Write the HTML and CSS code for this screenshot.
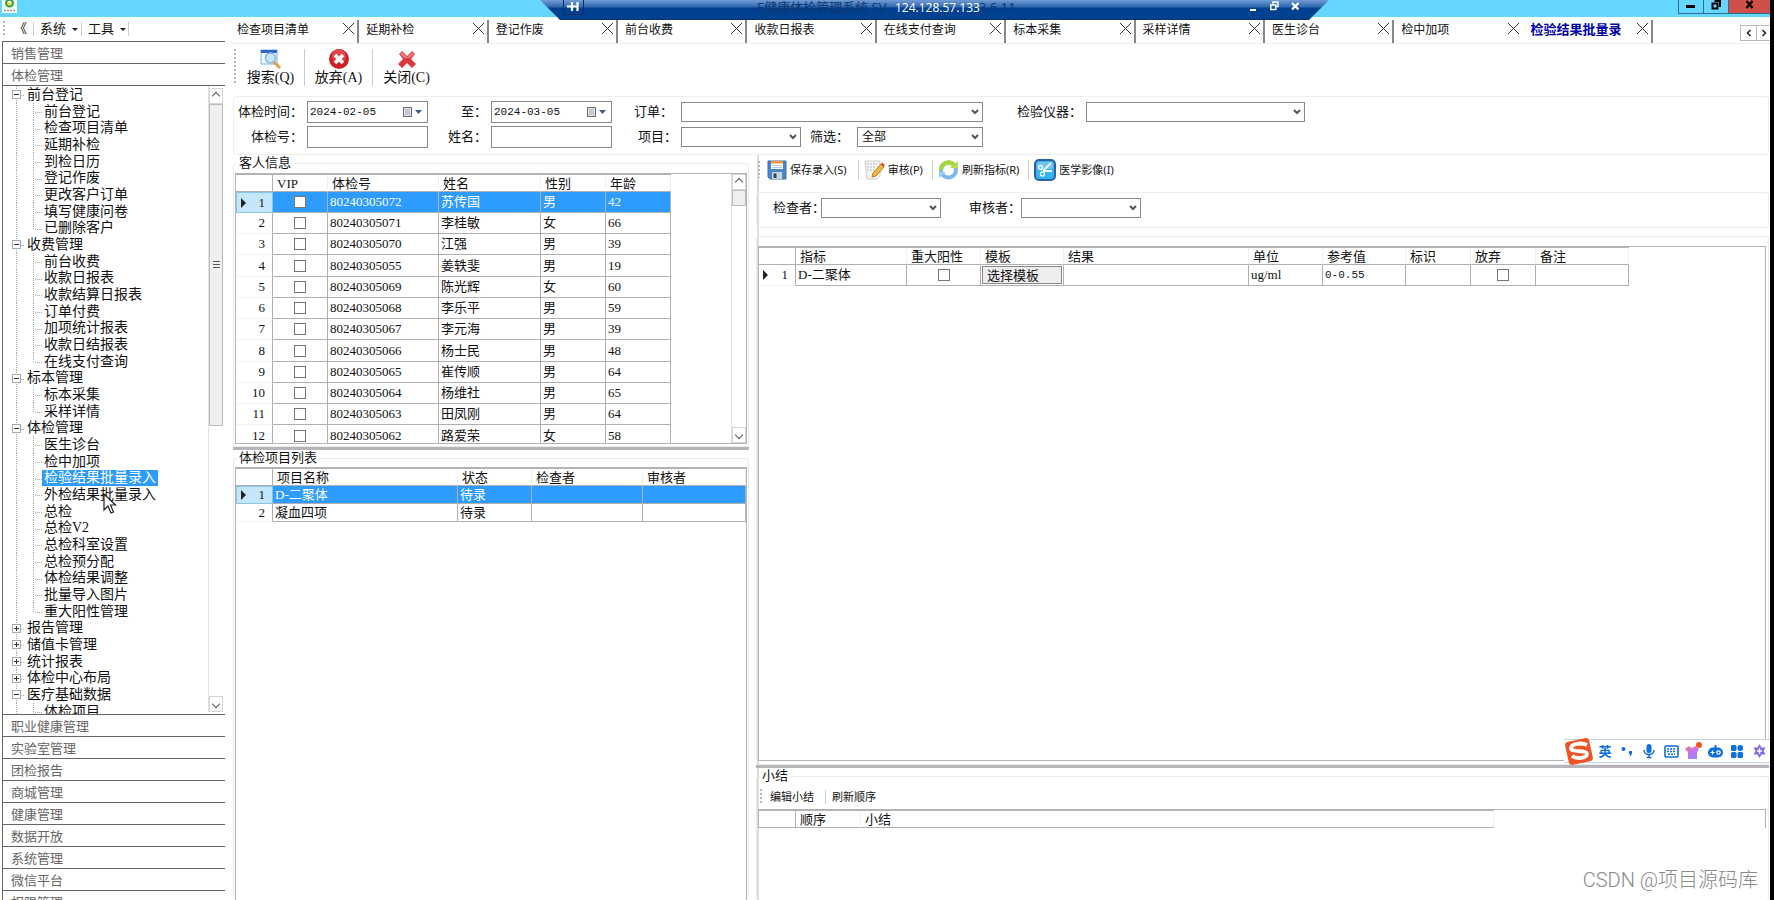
FILE: index.html
```html
<!DOCTYPE html>
<html lang="zh-CN">
<head>
<meta charset="utf-8">
<title>E健康体检管理系统</title>
<link rel="stylesheet" href="styles.css">
</head>
<body>
<div class="desktop">
  <header class="titlebar">
    <svg class="app-logo" width="15" height="13" viewBox="0 0 15 13"><rect width="15" height="13" fill="#f4fbf4"/><circle cx="7.500" cy="3" r="3.400" fill="none" stroke="#3aa537" stroke-width="2.200"/><path d="M5 3.500h5" stroke="#e8c62c" stroke-width="1.500"/><path d="M2 10.500h11" stroke="#999" stroke-width="1.500" stroke-dasharray="2 1"/></svg>
    <div class="window-buttons">
      <button class="win-btn" aria-label="最小化"><svg width="10" height="10"><path d="M0 6.500h9" stroke="#000" stroke-width="3"/></svg></button>
      <button class="win-btn" aria-label="还原"><svg width="10" height="10"><path d="M1.500 3.500h5v5h-5zM3.500 1h5.500v6" fill="none" stroke="#000" stroke-width="2"/></svg></button>
      <button class="win-btn win-close" aria-label="关闭"><svg width="10" height="10"><path d="M1.500 1l6 7M7.500 1l-6 7" stroke="#000" stroke-width="2.200"/></svg></button>
    </div>
  </header>

  <div class="remote-bar">
    <button class="pin" aria-label="固定"><svg width="13" height="11"><path d="M0 5.500h4M5 1v9M10.500 1v9M5 5.500h6" stroke="#fff" stroke-width="2.200" fill="none"/></svg></button>
    <span class="ghost ghost-name">E健康体检管理系统 SV</span>
    <span class="host">124.128.57.133</span>
    <span class="ghost">3.6.11</span>
    <span class="remote-actions">
      <button aria-label="最小化"><svg width="9" height="10"><path d="M1 9h6" stroke="#fff" stroke-width="2"/></svg></button>
      <button aria-label="还原"><svg width="9" height="10"><path d="M.8 4h5v4.500h-5zM3 3.500v-2.500h5v4.500h-1.500" stroke="#fff" stroke-width="1.400" fill="none"/></svg></button>
      <button aria-label="断开"><svg width="9" height="10"><path d="M1 2l6.500 6.500M7.500 2l-6.500 6.500" stroke="#fff" stroke-width="2.200"/></svg></button>
    </span>
  </div>

  <div class="workspace">
    <aside class="sidebar">
      <nav class="menu">
        <span class="grip"></span>
        <button class="collapse">《</button>
        <button class="menu-btn">系统</button>
        <button class="menu-btn">工具</button>
      </nav>
      <div class="accordion">
        <button class="section">销售管理</button>
        <button class="section">体检管理</button>
      </div>
      <div class="tree-pane">
        <ul class="tree">
          <li class="branch"><i class="box"></i>前台登记</li>
          <li class="leaf">前台登记</li>
          <li class="leaf">检查项目清单</li>
          <li class="leaf">延期补检</li>
          <li class="leaf">到检日历</li>
          <li class="leaf">登记作废</li>
          <li class="leaf">更改客户订单</li>
          <li class="leaf">填写健康问卷</li>
          <li class="leaf last">已删除客户</li>
          <li class="branch"><i class="box"></i>收费管理</li>
          <li class="leaf">前台收费</li>
          <li class="leaf">收款日报表</li>
          <li class="leaf">收款结算日报表</li>
          <li class="leaf">订单付费</li>
          <li class="leaf">加项统计报表</li>
          <li class="leaf">收款日结报表</li>
          <li class="leaf last">在线支付查询</li>
          <li class="branch"><i class="box"></i>标本管理</li>
          <li class="leaf">标本采集</li>
          <li class="leaf last">采样详情</li>
          <li class="branch"><i class="box"></i>体检管理</li>
          <li class="leaf">医生诊台</li>
          <li class="leaf">检中加项</li>
          <li class="leaf"><span class="picked">检验结果批量录入</span></li>
          <li class="leaf">外检结果批量录入</li>
          <li class="leaf">总检</li>
          <li class="leaf">总检V2</li>
          <li class="leaf">总检科室设置</li>
          <li class="leaf">总检预分配</li>
          <li class="leaf">体检结果调整</li>
          <li class="leaf">批量导入图片</li>
          <li class="leaf last">重大阳性管理</li>
          <li class="branch"><i class="box plus"></i>报告管理</li>
          <li class="branch"><i class="box plus"></i>储值卡管理</li>
          <li class="branch"><i class="box plus"></i>统计报表</li>
          <li class="branch"><i class="box plus"></i>体检中心布局</li>
          <li class="branch"><i class="box"></i>医疗基础数据</li>
          <li class="leaf">体检项目</li>
        </ul>
        <div class="scrollbar">
          <span class="arrow up"></span>
          <span class="thumb thumb-tree"></span>
          <span class="arrow down"></span>
        </div>
      </div>
      <div class="accordion accordion-bottom">
        <button class="section">职业健康管理</button>
        <button class="section">实验室管理</button>
        <button class="section">团检报告</button>
        <button class="section">商城管理</button>
        <button class="section">健康管理</button>
        <button class="section">数据开放</button>
        <button class="section">系统管理</button>
        <button class="section">微信平台</button>
        <button class="section">权限管理</button>
      </div>
      <svg class="cursor" width="14" height="22" viewBox="0 0 14 22"><path d="M1 1v16l4-4 3 7 2.500-1-3-7h5z" fill="#fff" stroke="#222" stroke-width="1.200"/></svg>
    </aside>

    <main class="main">
      <div class="tabs-row">
        <nav class="tabs">
          <div class="tab"><span>检查项目清单</span><button class="x" aria-label="关闭"></button></div>
          <div class="tab"><span>延期补检</span><button class="x" aria-label="关闭"></button></div>
          <div class="tab"><span>登记作废</span><button class="x" aria-label="关闭"></button></div>
          <div class="tab"><span>前台收费</span><button class="x" aria-label="关闭"></button></div>
          <div class="tab"><span>收款日报表</span><button class="x" aria-label="关闭"></button></div>
          <div class="tab"><span>在线支付查询</span><button class="x" aria-label="关闭"></button></div>
          <div class="tab"><span>标本采集</span><button class="x" aria-label="关闭"></button></div>
          <div class="tab"><span>采样详情</span><button class="x" aria-label="关闭"></button></div>
          <div class="tab"><span>医生诊台</span><button class="x" aria-label="关闭"></button></div>
          <div class="tab before-active"><span>检中加项</span><button class="x" aria-label="关闭"></button></div>
          <div class="tab active"><span>检验结果批量录</span><button class="x" aria-label="关闭"></button></div>
        </nav>
        <div class="tab-scroll">
          <button aria-label="向左"><svg width="6" height="8"><path d="M4.500 1L1.500 4l3 3" fill="none" stroke="#222" stroke-width="1.500"/></svg></button>
          <button aria-label="向右"><svg width="6" height="8"><path d="M1.500 1l3 3-3 3" fill="none" stroke="#222" stroke-width="1.500"/></svg></button>
        </div>
      </div>

      <div class="toolbar">
        <span class="grip"></span>
        <button class="tool">
          <svg width="22" height="20" viewBox="0 0 22 20"><rect x="1" y="1" width="16" height="14" fill="#eef6ff" stroke="#7fb2ea"/><rect x="1" y="1" width="16" height="3" fill="#2f66c8"/><path d="M14 13l6 6" stroke="#d9a441" stroke-width="3"/><circle cx="10.500" cy="9" r="5" fill="#bfeaff" stroke="#8db4d8" stroke-width="1.500"/></svg>
          <span>搜索(Q)</span>
        </button>
        <button class="tool">
          <svg width="22" height="20" viewBox="0 0 22 20"><circle cx="11" cy="10" r="10" fill="#cf1f26"/><circle cx="11" cy="7" r="7" fill="#e0474b"/><path d="M7 6l8 8M15 6l-8 8" stroke="#fff" stroke-width="3.600"/></svg>
          <span>放弃(A)</span>
        </button>
        <button class="tool">
          <svg width="22" height="20" viewBox="0 0 22 20"><path d="M3 5l3-3 5 5 5-5 3 3-4 5 5 5-4 4-5-5-5 5-4-4 5-5z" fill="#d8393d"/><path d="M4 5l2-2 5 5 5-5 2 2-4 4h-6z" fill="#ea7a7c"/></svg>
          <span>关闭(C)</span>
        </button>
      </div>

      <form class="filters">
        <label for="d1">体检时间：</label>
        <div class="date"><input id="d1" type="text" value="2024-02-05"><svg width="20" height="12"><path d="M1.500 1.500h8v9h-8z" fill="#e4e4ee" stroke="#666"/><path d="M3 4h5M3 6h5M3 8h5" stroke="#aab"/><path d="M13 4h7l-3.500 4z" fill="#3c5a8c"/></svg></div>
        <label for="d2">至：</label>
        <div class="date"><input id="d2" type="text" value="2024-03-05"><svg width="20" height="12"><path d="M1.500 1.500h8v9h-8z" fill="#e4e4ee" stroke="#666"/><path d="M3 4h5M3 6h5M3 8h5" stroke="#aab"/><path d="M13 4h7l-3.500 4z" fill="#3c5a8c"/></svg></div>
        <label class="loose" for="order">订单：</label>
        <select id="order" class="span3"><option></option></select>
        <label for="device">检验仪器：</label>
        <select id="device"><option></option></select>

        <label for="no">体检号：</label>
        <input id="no" class="text" type="text">
        <label for="name">姓名：</label>
        <input id="name" class="text" type="text">
        <label for="item">项目：</label>
        <select id="item"><option></option></select>
        <label class="loose" for="pick">筛选：</label>
        <select id="pick"><option>全部</option></select>
      </form>

      <div class="panes">
        <section class="left">
          <fieldset class="group guests">
            <legend>客人信息</legend>
            <div class="grid guests-grid">
              <table class="data guests-table">
                <colgroup><col class="w38"><col class="w55"><col class="w111"><col class="w102"><col class="w65"><col class="w65"></colgroup>
                <thead><tr><th></th><th>VIP</th><th>体检号</th><th>姓名</th><th>性别</th><th>年龄</th></tr></thead>
                <tbody>
                  <tr class="selected"><th class="current">1</th><td class="mid"><input type="checkbox" aria-label="VIP"></td><td>80240305072</td><td>苏传国</td><td>男</td><td>42</td></tr>
                  <tr><th>2</th><td class="mid"><input type="checkbox" aria-label="VIP"></td><td>80240305071</td><td>李桂敏</td><td>女</td><td>66</td></tr>
                  <tr><th>3</th><td class="mid"><input type="checkbox" aria-label="VIP"></td><td>80240305070</td><td>江强</td><td>男</td><td>39</td></tr>
                  <tr><th>4</th><td class="mid"><input type="checkbox" aria-label="VIP"></td><td>80240305055</td><td>姜轶斐</td><td>男</td><td>19</td></tr>
                  <tr><th>5</th><td class="mid"><input type="checkbox" aria-label="VIP"></td><td>80240305069</td><td>陈光辉</td><td>女</td><td>60</td></tr>
                  <tr><th>6</th><td class="mid"><input type="checkbox" aria-label="VIP"></td><td>80240305068</td><td>李乐平</td><td>男</td><td>59</td></tr>
                  <tr><th>7</th><td class="mid"><input type="checkbox" aria-label="VIP"></td><td>80240305067</td><td>李元海</td><td>男</td><td>39</td></tr>
                  <tr><th>8</th><td class="mid"><input type="checkbox" aria-label="VIP"></td><td>80240305066</td><td>杨士民</td><td>男</td><td>48</td></tr>
                  <tr><th>9</th><td class="mid"><input type="checkbox" aria-label="VIP"></td><td>80240305065</td><td>崔传顺</td><td>男</td><td>64</td></tr>
                  <tr><th>10</th><td class="mid"><input type="checkbox" aria-label="VIP"></td><td>80240305064</td><td>杨维社</td><td>男</td><td>65</td></tr>
                  <tr><th>11</th><td class="mid"><input type="checkbox" aria-label="VIP"></td><td>80240305063</td><td>田凤刚</td><td>男</td><td>64</td></tr>
                  <tr><th>12</th><td class="mid"><input type="checkbox" aria-label="VIP"></td><td>80240305062</td><td>路爱荣</td><td>女</td><td>58</td></tr>
                </tbody>
              </table>
              <div class="scrollbar">
                <span class="arrow up"></span>
                <span class="thumb thumb-guests"></span>
                <span class="arrow down"></span>
              </div>
            </div>
          </fieldset>
          <div class="splitter"></div>
          <fieldset class="group items">
            <legend>体检项目列表</legend>
            <div class="grid">
              <table class="data items-table">
                <colgroup><col class="w38"><col class="w185"><col class="w74"><col class="w111"><col></colgroup>
                <thead><tr><th></th><th>项目名称</th><th>状态</th><th>检查者</th><th>审核者</th></tr></thead>
                <tbody>
                  <tr class="selected"><th class="current">1</th><td>D-二聚体</td><td>待录</td><td></td><td></td></tr>
                  <tr><th>2</th><td>凝血四项</td><td>待录</td><td></td><td></td></tr>
                </tbody>
              </table>
            </div>
          </fieldset>
        </section>

        <section class="right">
          <div class="actions">
            <span class="grip"></span>
            <button class="action"><svg width="20" height="20" viewBox="0 0 20 20"><path d="M1 1h18v18H3l-2-2z" fill="#4a86c8" stroke="#3b6ea8"/><rect x="4" y="1" width="12" height="8" fill="#fff"/><rect x="4" y="1" width="12" height="2.500" fill="#f0973c"/><path d="M5 5.500h10M5 7.500h10" stroke="#bcd"/><rect x="5" y="12" width="10" height="7" fill="#c9d3dc"/><rect x="6.500" y="13.500" width="3" height="4.500" fill="#345"/></svg>保存录入(S)</button>
            <button class="action"><svg width="21" height="20" viewBox="0 0 21 20"><path d="M1 1h15v15l-3 3H3z" fill="#f4f4f4" stroke="#ccc"/><path d="M3 4h10M3 7h9M3 10h7" stroke="#bbb" stroke-dasharray="2 1"/><path d="M8 17l1-4 8-9 3 3-8 9z" fill="#f1b83a" stroke="#b9821c"/><path d="M16.500 4.500l1.500-2 3 2.500-1.500 2z" fill="#d3504a"/></svg>审核(P)</button>
            <button class="action"><svg width="21" height="22" viewBox="0 0 21 22"><circle cx="10.500" cy="11" r="7.500" fill="none" stroke="#7db8ee" stroke-width="4"/><path d="M3 11a7.500 7.500 0 0 1 13-5" fill="none" stroke="#a6d63f" stroke-width="4.500"/><path d="M12 9h8V2z" fill="#b6dc5c"/><path d="M8 13H1v6z" fill="#9ccdf4"/></svg>刷新指标(R)</button>
            <button class="action"><svg width="22" height="22" viewBox="0 0 22 22"><rect x="1" y="1" width="20" height="20" rx="4" fill="#35b4ee" stroke="#2a62a8" stroke-width="2"/><rect x="3" y="3" width="16" height="7" rx="2" fill="#74c4f2"/><path d="M17 4l-8 8M18 12H9" stroke="#e9faff" stroke-width="1.800"/><circle cx="6.500" cy="8.500" r="2" fill="none" stroke="#e9faff" stroke-width="1.300"/><circle cx="8.500" cy="15" r="2" fill="none" stroke="#e9faff" stroke-width="1.300"/></svg>医学影像(I)</button>
          </div>
          <div class="checkers">
            <label for="c1">检查者：</label><select id="c1"><option></option></select>
            <label for="c2">审核者：</label><select id="c2"><option></option></select>
          </div>
          <div class="group results">
            <div class="grid">
              <table class="data results-table">
                <colgroup><col class="w38"><col class="w111"><col class="w74"><col class="w83"><col class="w185"><col class="w74"><col class="w83"><col class="w65"><col class="w65"><col class="w93"></colgroup>
                <thead><tr><th></th><th>指标</th><th>重大阳性</th><th>模板</th><th>结果</th><th>单位</th><th>参考值</th><th>标识</th><th>放弃</th><th>备注</th></tr></thead>
                <tbody>
                  <tr><th class="current">1</th><td>D-二聚体</td><td class="mid"><input type="checkbox" aria-label="重大阳性"></td><td class="cell-btn"><button>选择模板</button></td><td></td><td>ug/ml</td><td class="mono">0-0.55</td><td></td><td class="mid"><input type="checkbox" aria-label="放弃"></td><td></td></tr>
                </tbody>
              </table>
            </div>
          </div>
          <div class="splitter"></div>
          <fieldset class="group summary">
            <legend>小结</legend>
            <div class="actions summary-actions">
              <span class="grip"></span>
              <button class="action">编辑小结</button>
              <button class="action">刷新顺序</button>
            </div>
            <div class="grid">
              <table class="data summary-table">
                <colgroup><col class="w38"><col class="w65"><col></colgroup>
                <thead><tr><th></th><th>顺序</th><th>小结</th></tr></thead>
              </table>
            </div>
          </fieldset>
        </section>
      </div>
    </main>
  </div>

  <div class="ime">
    <svg class="ime-logo" width="30" height="29" viewBox="0 0 30 29"><path d="M3 5L22 1q2 0 3 2l4 18q0 2-2 3L8 28q-2 0-3-2L1 8q0-2 2-3z" fill="#ee5326"/><path d="M23 8C17 5 7 7 7 11.500c0 4 16 1 16 5.500 0 4-10 5.500-15 2" fill="none" stroke="#fff" stroke-width="3.800"/></svg>
    <span class="ime-mode">英</span>
    <svg width="12" height="14" viewBox="0 0 12 14"><circle cx="2.500" cy="5" r="2" fill="#0f6fdc"/><path d="M8 7h3c.5 3-1 5-2.500 5.500L9 10H8z" fill="#0f6fdc"/></svg>
    <svg width="12" height="16" viewBox="0 0 12 16"><rect x="3.500" y="1" width="5" height="9" rx="2.500" fill="#0f6fdc"/><path d="M1 7c0 6 10 6 10 0M6 11v4M3.500 14.500h5" fill="none" stroke="#0f6fdc" stroke-width="1.500"/></svg>
    <svg width="15" height="13" viewBox="0 0 15 13"><rect x="1" y="1" width="13" height="11" rx="1" fill="none" stroke="#0f6fdc" stroke-width="1.600"/><path d="M3 4h9M3 6.500h9M4 9.200h7" stroke="#0f6fdc" stroke-width="1.400" stroke-dasharray="2 1"/></svg>
    <svg width="17" height="18" viewBox="0 0 17 18"><defs><linearGradient id="shirt" x1="0" y1="0" x2="1" y2="1"><stop offset="0" stop-color="#ff6b8a"/><stop offset=".6" stop-color="#b678ff"/><stop offset="1" stop-color="#6f9bff"/></linearGradient></defs><path d="M0 7l4-3c1 2 5 2 6 0l4 3-2 3v7H3v-7z" fill="url(#shirt)"/><circle cx="14" cy="3" r="3" fill="#ee5326"/></svg>
    <svg width="15" height="13" viewBox="0 0 15 13"><path d="M7.500 0v3" stroke="#0f6fdc" stroke-width="2"/><rect y="2.500" width="15" height="10" rx="5" fill="#0f6fdc"/><path d="M2.500 7.500h4M4.500 5.500v4" stroke="#fff" stroke-width="1.200"/><circle cx="10.500" cy="7.500" r="1.700" fill="none" stroke="#fff" stroke-width="1.200"/></svg>
    <svg width="12" height="13" viewBox="0 0 12 13"><rect y="0" width="5.500" height="6" rx="1.500" fill="#0f6fdc"/><rect x="6.500" width="5.500" height="6" rx="2.500" fill="#0f6fdc"/><rect y="7" width="5.500" height="6" rx="1.500" fill="#0f6fdc"/><rect x="6.500" y="7" width="5.500" height="6" rx="1.500" fill="#0f6fdc"/></svg>
    <svg width="13" height="14" viewBox="0 0 13 14"><path d="M6.500 0l2 3.500h4L10.500 7l2 3.500h-4l-2 3.500-2-3.500h-4L2.500 7l-2-3.500h4z" fill="#7b6fe8"/><path d="M6.500 4v6M4 7h5" stroke="#fff" stroke-width="1.300"/></svg>
  </div>
  <div class="watermark">CSDN @项目源码库</div>
</div>
</body>
</html>
```

FILE: styles.css
```css
* { box-sizing: border-box; }

body {
  margin: 0;
  background: #000;
  color: #111;
  font: 13px/16px "Liberation Serif", "Noto Sans CJK SC", serif;
}

button, input, select {
  margin: 0;
  padding: 0;
  border: 0;
  border-radius: 0;
  background: none;
  color: inherit;
  font: inherit;
}

.desktop {
  position: relative;
  display: flex;
  flex-direction: column;
  height: 100vh;
  margin-right: 4px;
  overflow: hidden;
  background: #fff;
}

/* Title bar */
.titlebar {
  display: flex;
  justify-content: space-between;
  align-items: flex-start;
  flex: none;
  height: 17px;
  padding-left: 2px;
  background: #64d6ff;
}
.window-buttons { display: flex; }
.win-btn {
  display: flex;
  align-items: center;
  justify-content: center;
  width: 25px;
  height: 14px;
  border: 1px solid #2c6f8c;
  border-top: 0;
  border-right: 0;
  padding-bottom: 4px;
}
.win-close { width: 42px; background: #cf5048; }

.remote-bar {
  position: absolute;
  top: 0;
  left: 540px;
  display: flex;
  align-items: flex-start;
  width: 789px;
  height: 20px;
  padding: 0 29px 0 23px;
  background: linear-gradient(#6f9cd6, #2f66ae 7px, #003f91 8px, #00428f 18px, #0a3068);
  clip-path: polygon(0 0, 100% 0, calc(100% - 20px) 100%, 20px 100%);
  color: #fff;
  font: 12px/15px "Open Sans", "Noto Sans CJK SC", sans-serif;
}
.pin {
  display: flex;
  justify-content: center;
  width: 21px;
  height: 15px;
  padding-top: 1px;
  border: 1px solid #0b2c5e;
  border-top: 0;
  border-radius: 0 0 3px 3px;
}
.ghost { color: #0f376e; font-size: 13px; white-space: nowrap; }
.ghost-name { width: 137px; margin-left: 173px; }
.host { width: 84px; margin-left: 1px; white-space: nowrap; }
.remote-actions { display: flex; gap: 12px; margin-left: auto; }
.remote-actions button { display: flex; padding-top: 1px; }

/* Frame */
.workspace { display: flex; flex: 1; min-height: 0; }

.sidebar {
  position: relative;
  display: flex;
  flex-direction: column;
  flex: none;
  width: 225px;
}
.menu {
  display: flex;
  align-items: center;
  flex: none;
  height: 24px;
  padding-left: 3px;
}
.grip {
  align-self: stretch;
  flex: none;
  width: 2px;
  margin: 4px 0;
  background: repeating-linear-gradient(#b4b4b4 0 2px, transparent 2px 4px);
}
.collapse { width: 28px; padding-right: 6px; text-align: right; white-space: nowrap; }
.menu-btn {
  display: flex;
  align-items: center;
  gap: 6px;
  width: 48px;
  padding-left: 6px;
  border-left: 1px solid #ccc;
  line-height: 14px;
  white-space: nowrap;
}
.menu-btn:last-child { border-right: 1px solid #ccc; }
.menu-btn::after {
  content: "";
  border: 3px solid transparent;
  border-top-color: #222;
  border-bottom: 0;
}

.accordion {
  flex: none;
  margin-left: 2px;
  border-left: 1px solid #666;
}
.section {
  display: block;
  width: 100%;
  height: 22px;
  padding: 2px 0 0 8px;
  border-top: 1px solid #666;
  color: #666;
  text-align: left;
}
.accordion-bottom { height: 186px; overflow: hidden; }

.tree-pane {
  display: flex;
  justify-content: space-between;
  flex: 1;
  min-height: 0;
  margin-left: 2px;
  padding: 0 2px 2px 0;
  border-top: 1px solid #666;
  border-left: 1px solid #666;
  overflow: hidden;
}
.tree {
  flex: 1;
  margin: 0;
  padding: 0;
  list-style: none;
  font-size: 14px;
}
.tree li { height: 17px; line-height: 17px; white-space: nowrap; }
.tree li:nth-child(3n) { height: 16px; line-height: 16px; }
.branch {
  display: flex;
  align-items: center;
  gap: 6px;
  padding-left: 9px;
  background:
    repeating-linear-gradient(#aaa 0 1px, transparent 1px 2px) 13px 0 / 1px 100% no-repeat,
    repeating-linear-gradient(90deg, #aaa 0 1px, transparent 1px 2px) 18px 9px / 4px 1px no-repeat;
}
.leaf {
  padding-left: 41px;
  background:
    repeating-linear-gradient(#aaa 0 1px, transparent 1px 2px) 13px 0 / 1px 100% no-repeat,
    repeating-linear-gradient(#aaa 0 1px, transparent 1px 2px) 30px 0 / 1px 100% no-repeat,
    repeating-linear-gradient(90deg, #aaa 0 1px, transparent 1px 2px) 32px 9px / 7px 1px no-repeat;
}
.leaf.last {
  background-size: 1px 100%, 1px 9px, 7px 1px;
}
.box {
  flex: none;
  width: 9px;
  height: 9px;
  border: 1px solid #aaa;
  background: linear-gradient(#333, #333) center / 5px 1px no-repeat #fff;
}
.box.plus {
  background:
    linear-gradient(#333, #333) center / 5px 1px no-repeat,
    linear-gradient(#333, #333) center / 1px 5px no-repeat #fff;
}
.picked {
  display: inline-block;
  margin-left: -2px;
  padding: 0 2px;
  height: 16px;
  line-height: 16px;
  background: #2d9bff;
  color: #fff;
}
.cursor { position: absolute; left: 103px; top: 476px; }

.scrollbar {
  display: flex;
  flex-direction: column;
  flex: none;
  width: 15px;
  border-left: 1px solid #e0e0e0;
}
.tree-pane .scrollbar { padding-top: 2px; }
.arrow {
  display: flex;
  align-items: center;
  justify-content: center;
  flex: none;
  height: 16px;
  border: 1px solid #d4d4d4;
}
.arrow::before {
  content: "";
  width: 5px;
  height: 5px;
  border: solid #555;
  border-width: 1px 0 0 1px;
  transform: rotate(45deg);
}
.arrow.down { margin-top: auto; }
.arrow.down::before { transform: rotate(225deg); }
.thumb { flex: none; border: 1px solid #bbb; background: #efeff1; }
.thumb-tree {
  height: 322px;
  background: repeating-linear-gradient(#555 0 1px, #efeff1 1px 3px) center / 7px 8px no-repeat #efeff1;
}
.thumb-guests { height: 16px; }

/* Main area */
.main {
  display: flex;
  flex-direction: column;
  flex: 1;
  min-width: 0;
  margin-left: 5px;
}
.tabs-row {
  display: flex;
  flex: none;
  height: 27px;
  border-bottom: 1px solid #eee;
}
.tabs { display: flex; flex: 1; padding-top: 3px; }
.tab {
  display: flex;
  flex: 1 1 0;
  align-items: flex-start;
  justify-content: space-between;
  min-width: 0;
  height: 23px;
  padding: 2px 3px 0 7px;
  border-right: 2px solid #888;
  font-size: 12px;
  white-space: nowrap;
}
.before-active { border-color: transparent; }
.active { color: #0000a8; font-size: 13px; font-weight: bold; }
.x {
  width: 11px;
  height: 11px;
  margin-top: 1px;
  background:
    linear-gradient(45deg, transparent 47%, #333 47% 53%, transparent 53%),
    linear-gradient(135deg, transparent 47%, #333 47% 53%, transparent 53%);
}
.tab-scroll {
  display: flex;
  justify-content: flex-end;
  align-items: flex-end;
  width: 117px;
  padding-bottom: 2px;
}
.tab-scroll button {
  display: flex;
  align-items: center;
  justify-content: center;
  width: 16px;
  height: 16px;
  border: 1px solid #bbb;
  border-right: 0;
}
.tab-scroll button:last-child { width: 14px; }

.toolbar {
  display: flex;
  flex: none;
  height: 52px;
  padding: 3px 0 10px 4px;
}
.toolbar .grip { margin: 2px 0 3px 0; }
.tool {
  display: flex;
  flex-direction: column;
  align-items: center;
  width: 68px;
  margin: 2px 0 0;
  border-left: 1px solid #ccc;
  font-size: 14px;
  line-height: 18px;
  white-space: nowrap;
}
.tool svg { flex: none; }
.grip + .tool { border-color: transparent; }

.filters {
  display: grid;
  grid-template-columns: 69px 121px 55px 121px 61px 120px 48px 126px 95px 219px;
  grid-auto-rows: 22px;
  gap: 3px 4px;
  align-items: center;
  flex: none;
  height: 59px;
  margin: 0 1px 0 3px;
  padding: 4px 0 0;
  border: 1px solid #eee;
  border-radius: 3px;
}
.filters label { text-align: right; white-space: nowrap; }
.filters .loose { padding-right: 4px; }
.span3 { grid-column: span 3; }
.text, .date, select {
  width: 100%;
  height: 22px;
  border: 1px solid #888;
  background: #fff;
}
.date { display: flex; align-items: center; padding: 0 5px 0 2px; }
.date input {
  flex: 1;
  min-width: 0;
  font: 11px/16px "Liberation Mono", monospace;
}
select {
  height: 20px;
  padding: 0 4px;
  appearance: none;
  font-size: 12px;
  background: url("data:image/svg+xml,%3Csvg xmlns='http://www.w3.org/2000/svg' width='8' height='6'%3E%3Cpath d='M1 1l3 3 3-3' fill='none' stroke='%23555' stroke-width='2'/%3E%3C/svg%3E") right 3px center no-repeat #fff;
}

.panes { display: flex; flex: 1; min-height: 0; }
.left {
  display: flex;
  flex-direction: column;
  flex: none;
  width: 529px;
  margin-right: -3px;
  padding: 0 8px 0 3px;
  border-right: 2px solid #ddd;
}
.right {
  display: flex;
  flex-direction: column;
  flex: 1;
  min-width: 0;
  margin-right: 1px;
}

.group {
  display: flex;
  flex-direction: column;
  min-width: 0;
  margin: 0;
  padding: 2px 1px 0;
  border: 1px solid #eaeaea;
  border-radius: 3px;
}
.group legend { margin-left: 2px; padding: 0 2px; line-height: 16px; }
.guests { flex: none; height: 292px; }
.items { flex: 1; min-height: 0; padding-top: 1px; border-bottom: 0; }
.splitter { flex: none; height: 3px; background: #b6b4b8; }

.grid {
  display: flex;
  justify-content: space-between;
  align-items: flex-start;
  flex: 1;
  min-height: 0;
  overflow: hidden;
  border: 1px solid #b4b2b6;
}
.items .grid, .summary .grid { border-bottom: 0; }
.guests-grid { flex: none; height: 271px; }
.grid .scrollbar { align-self: stretch; }

.data {
  table-layout: fixed;
  border-spacing: 0;
  border-top: 1px solid #b4b2b6;
}
.guests-table { width: 435px; }
.items-table { width: 100%; }
.results-table { width: 870px; }
.summary-table { width: 735px; }
.data th, .data td {
  height: 18px;
  padding: 0 2px;
  overflow: hidden;
  border-right: 1px solid #b0b0b0;
  border-bottom: 1px solid #b0b0b0;
  font-weight: normal;
  line-height: 16px;
  text-align: left;
  white-space: nowrap;
}
.data thead th { height: 17px; padding-left: 4px; border-right-color: #f0f0f0; line-height: 15px; }
.data thead th:first-child { border-right-color: #b0b0b0; }
.data tbody th { padding-right: 7px; border-bottom-color: #f0f0f0; text-align: right; }
.data td.mid { padding: 0; text-align: center; }
.data td.mono { font-family: "Liberation Mono", monospace; font-size: 11px; }
.data .current::before {
  content: "";
  float: left;
  margin: 3px 0 0 2px;
  border: 5px solid transparent;
  border-left-color: #222;
  border-right: 0;
}
.guests-table tbody tr > *, .results-table tbody tr > * { height: 21px; }
.guests-table tbody tr:nth-child(4n) > * { height: 22px; }
.data .selected td { background: #2d9bff; color: #fff; }
.data .selected .current { border: 1px solid #8cc4e8; background: #c4e6fb; }
input[type="checkbox"] {
  display: block;
  width: 12px;
  height: 12px;
  margin: 0 auto;
  appearance: none;
  border: 1px solid #777;
  background: #fff;
}
.data td.cell-btn { padding: 1px; }
.cell-btn button {
  display: block;
  width: 100%;
  height: 18px;
  padding-left: 4px;
  border: 1px solid #888;
  background: #efedf0;
  line-height: 15px;
  text-align: left;
}
.w38 { width: 37px; }
.w55 { width: 55px; }
.w65 { width: 65px; }
.w74 { width: 74px; }
.w83 { width: 83px; }
.w93 { width: 93px; }
.w102 { width: 102px; }
.w111 { width: 111px; }
.w185 { width: 185px; }

.actions {
  display: flex;
  align-items: center;
  flex: none;
  height: 30px;
  padding-left: 2px;
  font-family: "Noto Sans", "Noto Sans CJK SC", sans-serif;
  font-size: 11px;
}
.actions .grip { margin: 6px 1px 7px 0; }
.action {
  display: flex;
  align-items: center;
  gap: 3px;
  height: 20px;
  padding: 0 9px 0 5px;
  border-left: 1px solid #ccc;
  white-space: nowrap;
}
.actions .grip + .action { padding-right: 11px; border-color: transparent; }
.checkers {
  display: flex;
  align-items: center;
  flex: none;
  height: 36px;
  margin: 7px 0 8px;
  padding: 0 0 4px 16px;
  border: 1px solid #eee;
  border-radius: 3px;
}
.checkers label { width: 48px; white-space: nowrap; }
.checkers select { width: 120px; }
.checkers select + label { width: 52px; margin-left: 28px; }
.results { flex: 1; min-height: 0; padding: 9px 2px 3px 1px; }
.summary { flex: none; height: 132px; padding: 0 2px 0 1px; border-bottom: 0; }
.summary-actions { height: 25px; }
.summary-actions .grip { margin: 5px 1px 6px 0; }
.summary-actions .action { height: 14px; padding-left: 6px; }

/* Overlays */
.ime {
  position: absolute;
  right: 0;
  top: 739px;
  display: grid;
  grid-template-columns: 30px repeat(8, 22px);
  align-items: center;
  justify-items: center;
  width: 206px;
  height: 24px;
  border: 1px solid #c4d4e4;
  border-width: 1px 0;
  background: #fff;
}
.ime .ime-logo { margin: -6px 0; }
.ime-mode {
  color: #0f6fdc;
  font: bold 13px/16px "Noto Sans CJK SC", sans-serif;
}
.watermark {
  position: absolute;
  right: 12px;
  bottom: 7px;
  color: #8a8a8a;
  font: 300 20px/26px Roboto, "Noto Sans CJK SC", sans-serif;
}
```
